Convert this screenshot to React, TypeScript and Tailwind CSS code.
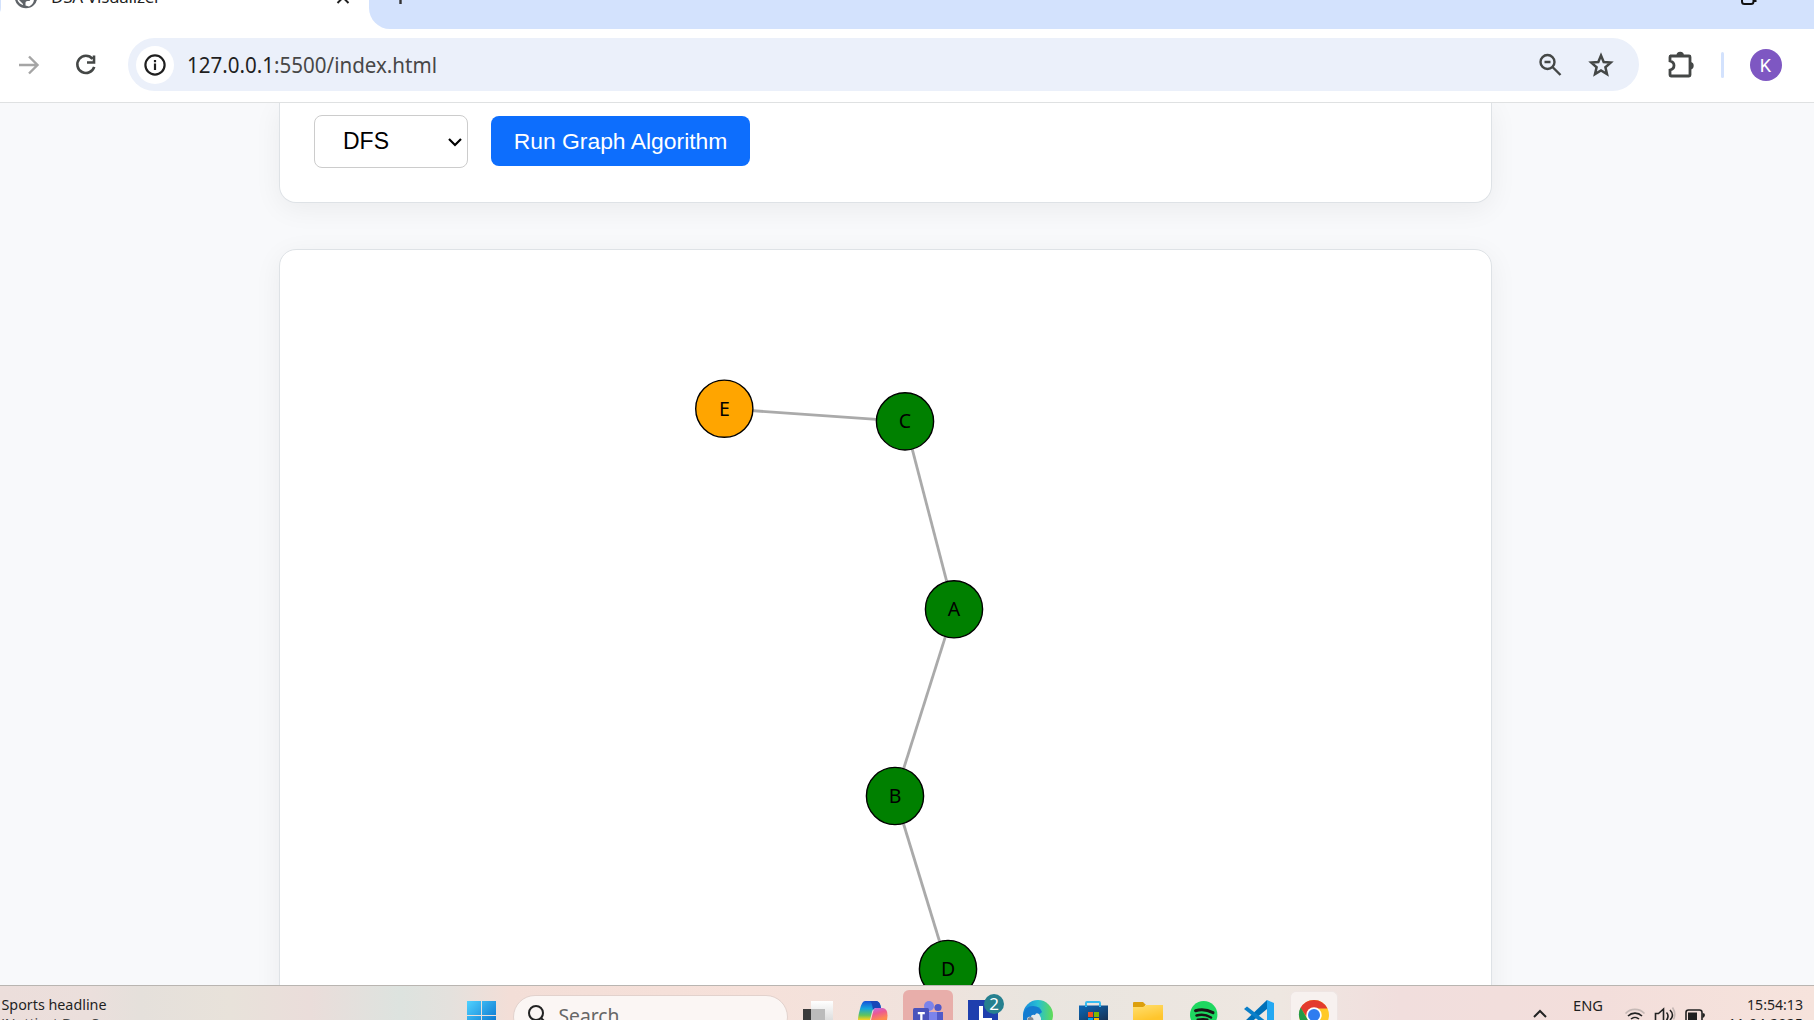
import React from 'react';

const nodes = [
  { id: 'E', x: 444.3, y: 158.7, fill: '#ffa500' },
  { id: 'C', x: 625, y: 171.4, fill: '#008000' },
  { id: 'A', x: 674, y: 359.3, fill: '#008000' },
  { id: 'B', x: 615, y: 546, fill: '#008000' },
  { id: 'D', x: 668, y: 719, fill: '#008000' },
];

const edges = [[0, 1], [1, 2], [2, 3], [3, 4]];

function TabStrip() {
  return (
    <div className="flex h-[29px] shrink-0 overflow-hidden bg-[#d3e2fd]">
      <div className="flex w-[369px] shrink-0 bg-white">
        <svg width="369" height="29" viewBox="0 0 369 29">
          <path d="M0 0h1v7q0 4-1 5z" fill="#d3e2fd" />
          <circle cx="26" cy="-3" r="11.3" fill="#5f6368" />
          <path d="M25.500 5.500v-3q0-1.500 2-1.500h2l1.500-2h3q0 5-5 7.500z" fill="#fff" />
          <path d="M17.500 0h1.500l4 4v1q-4-1-5.500-5z" fill="#fff" />
          <text x="51" y="3" fontFamily="Noto Sans" fontSize="17" textLength="110" fill="#1f1f1f">DSA Visualizer</text>
          <path d="M337.500 3l5.500-5.500 5.500 5.500" stroke="#1f1f1f" strokeWidth="2" fill="none" />
        </svg>
      </div>
      <div className="flex-1 bg-white">
        <div className="flex h-[29px] justify-between rounded-bl-[21px] bg-[#d3e2fd]">
          <svg width="60" height="29"><path d="M31.500 0v4" stroke="#333" strokeWidth="2.400" /></svg>
          <svg width="80" height="29"><path d="M8 0v1.500q0 2.500 2.500 2.500h6.500q2.500 0 2.500-2.500V0M20 1h1.500V0" stroke="#111" strokeWidth="2" fill="none" /></svg>
        </div>
      </div>
    </div>
  );
}

function Toolbar() {
  return (
    <div className="flex h-[74px] shrink-0 items-start border-b border-[#dfe1e2] bg-white pt-[9px]">
      <svg className="ml-[17px] mt-[14px]" width="24" height="24" fill="none" stroke="#a5a5a5" strokeWidth="2.400">
        <path d="M2 13h18M12 4.500l8.500 8.500-8.500 8.500" />
      </svg>
      <svg className="ml-[33px] mt-[14px]" width="26" height="26" fill="none" stroke="#444746" strokeWidth="2.600">
        <path d="M18.500 6.800a8.600 8.600 0 1 0 1.700 8M20 3.500v7h-7" />
      </svg>
      <div className="ml-[28px] flex h-[53px] w-[1511px] items-center rounded-full bg-[#ebf0fa] pl-2">
        <div className="flex size-[38px] items-center justify-center rounded-full bg-white">
          <svg width="24" height="24" fill="none" stroke="#1f1f1f" strokeWidth="2.200">
            <circle cx="12" cy="12" r="9.600" />
            <path d="M12 10.500v6.500M12 7v2.300" />
          </svg>
        </div>
        <svg className="ml-[13px]" width="260" height="53" fontFamily="Noto Sans" fontSize="22.500">
          <text x="0" y="34.700" textLength="250" lengthAdjust="spacingAndGlyphs" fill="#1f1f1f">127.0.0.1<tspan fill="#474747">:5500/index.html</tspan></text>
        </svg>
        <svg className="ml-auto" width="26" height="26" fill="none" stroke="#444746" strokeWidth="2.400">
          <circle cx="10.500" cy="10" r="7" />
          <path d="M7.500 10h6M15.500 15l8 8" />
        </svg>
        <svg className="ml-[25px] mr-[25px]" width="26" height="26" fill="none" stroke="#444746" strokeWidth="2.500">
          <path d="M13 3.500l2.700 6.500 7 .6-5.300 4.600 1.600 6.900-6-3.700-6 3.700 1.600-6.900-5.300-4.600 7-.6z" />
        </svg>
      </div>
      <svg className="ml-[27px] mt-[11px]" width="30" height="30">
        <path d="M4 7h19q1 0 1 1v18q0 1-1 1H5q-1 0-1-1v-5q4-1 4-4.500T4 12V8q0-1 1-1z" fill="none" stroke="#444746" strokeWidth="2.800" />
        <path d="M10.500 6.500a3.700 3.700 0 0 1 7.400 0zM24 13a3.700 3.700 0 0 1 0 7.400z" fill="#444746" />
      </svg>
      <div className="ml-[25px] mt-[14px] h-[26px] w-[3px] rounded-full bg-[#d3e2fd]" />
      <div className="ml-[26px] mt-[11px] flex size-8 items-center justify-center rounded-full bg-[#7e57c2] pr-px font-[Roboto] text-[18px] text-white">K</div>
    </div>
  );
}

function Graph() {
  return (
    <svg width="1211" height="735" className="block">
      {edges.map(([a, b]) => (
        <line key={a} x1={nodes[a].x} y1={nodes[a].y} x2={nodes[b].x} y2={nodes[b].y} stroke="#aaa" strokeWidth="2.800" />
      ))}
      {nodes.map((n) => (
        <g key={n.id}>
          <circle cx={n.x} cy={n.y} r="28.600" fill={n.fill} stroke="#000" strokeWidth="1.400" />
          <text x={n.x} y={n.y + 7} textAnchor="middle" fontFamily="Noto Sans" fontSize="19.500" fill="#000">{n.id}</text>
        </g>
      ))}
    </svg>
  );
}

function Page() {
  return (
    <main className="flex min-h-0 flex-1 flex-col items-start overflow-hidden bg-[#f8f9fb] pl-[279px]">
      <section className="flex h-[100px] w-[1213px] shrink-0 items-start rounded-b-[17px] border border-t-0 border-[#dee2e6] bg-white pl-[34px] pt-3 font-['Liberation_Sans'] text-[24px] shadow-[0_6px_28px_rgba(0,0,0,0.06)]">
        <div className="flex h-[53px] w-[154px] items-center justify-between rounded-lg border border-[#ccc] pl-7 pr-[5px] text-black">
          <span className="text-[23px]">DFS</span>
          <svg width="14" height="10" fill="none" stroke="#000" strokeWidth="2.200"><path d="M1 2l6 6 6-6" /></svg>
        </div>
        <button className="ml-[23px] mt-px h-[50px] w-[259px] whitespace-nowrap rounded-lg bg-[#0d6efd] pt-px text-[22.900px] text-white">Run Graph Algorithm</button>
      </section>
      <section className="mt-[46px] h-[900px] w-[1213px] shrink-0 rounded-t-[17px] border border-[#dee2e6] bg-white shadow-[0_6px_28px_rgba(0,0,0,0.06)]">
        <Graph />
      </section>
    </main>
  );
}

function TaskIcons() {
  return (
    <>
      <svg className="ml-[14px]" width="32" height="34">
        <defs>
          <linearGradient id="tv" x2="0" y2="1"><stop stopColor="#fff" /><stop offset="1" stopColor="#ddd" /></linearGradient>
        </defs>
        <path d="M1 23h22v11H1z" fill="#3b3b3b" />
        <path d="M9 15h22v19H9z" fill="url(#tv)" />
        <path d="M9 23h14v11H9z" fill="#bbb" />
      </svg>
      <svg className="ml-[23px]" width="32" height="34">
        <defs>
          <linearGradient id="cp1" x2="0" y2="1"><stop stopColor="#1750d8" /><stop offset=".4" stopColor="#16a5dc" /><stop offset=".75" stopColor="#62c45c" /><stop offset="1" stopColor="#ffd21c" /></linearGradient>
          <linearGradient id="cp2" x2=".4" y2="1"><stop stopColor="#b66ff5" /><stop offset=".5" stopColor="#ec5a92" /><stop offset="1" stopColor="#ff8a50" /></linearGradient>
        </defs>
        <path d="M8 15h11q4 0 5 7h-5q-3 0-4 4l-2 8H1q0-4 2-11 2-8 5-8z" fill="url(#cp1)" />
        <path d="M13 15h6q4 0 5 7h-5q-2 0-3 2-1-8-3-9z" fill="#1746b8" />
        <path d="M19 22h7q6 1 4 12H14l2-8q1-4 3-4z" fill="url(#cp2)" />
      </svg>
      <div className="ml-[14px] mt-[4px] flex h-[40px] w-[50px] justify-center rounded-t-md bg-[#e8aeaa]">
        <svg width="32" height="30">
          <circle cx="17" cy="16" r="5" fill="#7b83eb" />
          <circle cx="26" cy="17.500" r="3.600" fill="#5059c9" />
          <path d="M17 22h14v8H17z" fill="#5059c9" />
          <path d="M12 22h13v8H12z" fill="#7b83eb" />
          <rect x="1" y="18" width="16" height="17" rx="1.500" fill="#4b53bc" />
          <path d="M5.800 22h7v2.200H10.500V30H8.200v-5.800H5.800z" fill="#fff" />
        </svg>
      </div>
      <svg className="ml-[14px]" width="38" height="34" fontFamily="Noto Sans">
        <path d="M1 14h30v20H1z" fill="#1e3fae" />
        <path d="M12 20h4v12h9v2H12z" fill="#fff" />
        <circle cx="27" cy="18" r="10" fill="#26808f" />
        <text x="27" y="24" fontSize="17" textAnchor="middle" fill="#fff">2</text>
      </svg>
      <svg className="ml-[17px]" width="32" height="34">
        <defs>
          <linearGradient id="ed"><stop stopColor="#1689dd" /><stop offset=".5" stopColor="#27bfd2" /><stop offset="1" stopColor="#62dc54" /></linearGradient>
        </defs>
        <circle cx="16" cy="29" r="15" fill="url(#ed)" />
        <path d="M1 29q2-9 10-9 7 0 9 6l-9 8H1z" fill="#147bd0" />
        <path d="M5 34q0-4 4-3 0-3 4-2 1-3 4-1l2 4v2z" fill="#e4e8ea" />
        <circle cx="8.500" cy="34" r="3" fill="#818790" />
      </svg>
      <svg className="ml-[23px]" width="32" height="34">
        <defs><linearGradient id="st" x2="1" y2="1"><stop stopColor="#0b68b8" /><stop offset="1" stopColor="#173254" /></linearGradient></defs>
        <path d="M9 21v-4q0-1 1-1h12q1 0 1 1v4" fill="none" stroke="#38bdf1" strokeWidth="2" />
        <path d="M2 19.500h29V34H2z" fill="url(#st)" />
        <path d="M9 19.500v1.500M23 19.500v1.500" stroke="#38bdf1" strokeWidth="2" />
        <path d="M11 26h5v5h-5z" fill="#f25022" /><path d="M17 26h5v5h-5z" fill="#7fba00" />
        <path d="M11 32h5v2h-5z" fill="#00a4ef" /><path d="M17 32h5v2h-5z" fill="#ffb900" />
      </svg>
      <svg className="ml-[23px]" width="32" height="34">
        <defs><linearGradient id="fo" x2=".5" y2="1"><stop stopColor="#ffdf70" /><stop offset="1" stopColor="#ffc52c" /></linearGradient></defs>
        <path d="M1 17q0-1 1-1h9l3 3h-1v4H1z" fill="#dc9f0c" />
        <path d="M1 21h10l3-2h17v15H1z" fill="url(#fo)" />
      </svg>
      <svg className="ml-[24px]" width="32" height="34" fill="none" stroke="#191414" strokeLinecap="round">
        <circle cx="15.700" cy="28.700" r="13.700" fill="#1ed760" stroke="none" />
        <path d="M7.500 24.700q9-2.500 17.500 2" strokeWidth="3" />
        <path d="M8.500 29.500q8-2 14.500 2" strokeWidth="2.500" />
        <path d="M9.500 33.500q6-1 10 0" strokeWidth="2" />
      </svg>
      <svg className="ml-[23px]" width="32" height="34">
        <path d="M24 14v9L6 38l-4-3z" fill="#0070b8" />
        <path d="M1 23l3-2.500L24 36v5z" fill="#0a7fc9" />
        <path d="M24 14l7 3v17h-7z" fill="#24a8f2" />
      </svg>
      <div className="ml-[15px] mt-[5px] flex h-[40px] w-[48px] justify-center rounded-t-md border border-b-0 border-[#eee5e3] bg-[#f7f1ef]">
        <svg width="32" height="28">
          <circle cx="16" cy="23" r="15" fill="#ffc927" />
          <path d="M2.500 16Q7 8 16 8T29.500 16.500H16q-6 0-7.500 8z" fill="#e33b2e" />
          <path d="M2.700 15.500L10 28H2Q-.5 21 2.700 15.500z" fill="#229a48" />
          <circle cx="16" cy="23" r="7.700" fill="#fff" />
          <circle cx="16" cy="23" r="6" fill="#2f7cf0" />
        </svg>
      </div>
    </>
  );
}

function Taskbar() {
  return (
    <footer className="flex h-[35px] shrink-0 items-start overflow-hidden border-t border-[#b9b5b1] bg-[linear-gradient(90deg,#ecdedb_0px,#ebdfdc_90px,#e5e0db_140px,#e8e2da_230px,#eaddda_310px,#dde3df_400px,#e4e1dd_450px,#f3ded7_510px,#f6e1da_750px,#f2e2dc_880px,#e9e5df_1030px,#eee7e1_1280px,#f1dedd_1400px,#f3dedb_1600px,#f6e3dc_1814px)]">
      <svg width="466" height="34" fontFamily="Noto Sans" fill="#1f1f1f">
        <text x="1.500" y="23.700" fontSize="14.700" textLength="105" lengthAdjust="spacingAndGlyphs">Sports headline</text>
        <text x="1.500" y="43" fontSize="14.700" textLength="109" lengthAdjust="spacingAndGlyphs" fill="#444">'Nuttiest Day S...</text>
      </svg>
      <svg width="31" height="34">
        <defs><linearGradient id="win" gradientUnits="userSpaceOnUse" x1="1" y1="15" x2="30" y2="44"><stop stopColor="#50d2ff" /><stop offset="1" stopColor="#0067c8" /></linearGradient></defs>
        <path d="M1 15h14v14H1zM16 15h14v14H16zM1 30h14v14H1zM16 30h14v14H16z" fill="url(#win)" />
      </svg>
      <div className="ml-[16px] mt-[9px] flex h-[44px] w-[275px] shrink-0 rounded-full border border-[#e2d2cd] bg-[#fbf6f4]">
        <svg width="120" height="26" fontFamily="Noto Sans">
          <circle cx="22" cy="17" r="7" fill="none" stroke="#222" strokeWidth="2" />
          <path d="M27 22l6 6" stroke="#222" strokeWidth="2" />
          <text x="44.500" y="27" fontSize="19" textLength="61" lengthAdjust="spacingAndGlyphs" fill="#666">Search</text>
        </svg>
      </div>
      <TaskIcons />
      <svg className="ml-auto" width="300" height="34" fontFamily="Noto Sans" fill="#1f1f1f">
        <path d="M20 31l6-6 6 6" fill="none" stroke="#222" strokeWidth="2" />
        <text x="59" y="24.700" fontSize="14.700" textLength="30" lengthAdjust="spacingAndGlyphs">ENG</text>
        <g fill="none" stroke="#222" strokeWidth="1.600">
          <path d="M111.500 27.500a13 13 0 0 1 19 0" stroke="#c6b9b6" />
          <path d="M114 30a10 10 0 0 1 14 0M117 33a6 6 0 0 1 8 0" />
          <path d="M141.500 27.500h3l5-4.500v18l-5-5h-3z" />
          <path d="M152.500 26.500q3 3 0 8M156 24q5 5 0 10" />
          <path d="M158.500 21.500q4 6 1 12" stroke="#c6b9b6" />
          <rect x="172" y="24" width="16" height="13" rx="2.500" />
        </g>
        <path d="M174 26.500h9v8h-9zM188.500 27q2.500 0 2.500 2t-2.500 3z" />
        <text x="289" y="23.700" fontSize="14.700" textAnchor="end" textLength="56" lengthAdjust="spacingAndGlyphs">15:54:13</text>
        <text x="289" y="43" fontSize="14.700" textAnchor="end" textLength="75" lengthAdjust="spacingAndGlyphs">11-04-2025</text>
      </svg>
    </footer>
  );
}

export default function App() {
  return (
    <div className="flex h-[1020px] w-[1814px] flex-col overflow-hidden bg-white font-['Noto_Sans',sans-serif]">
      <TabStrip />
      <Toolbar />
      <Page />
      <Taskbar />
    </div>
  );
}
